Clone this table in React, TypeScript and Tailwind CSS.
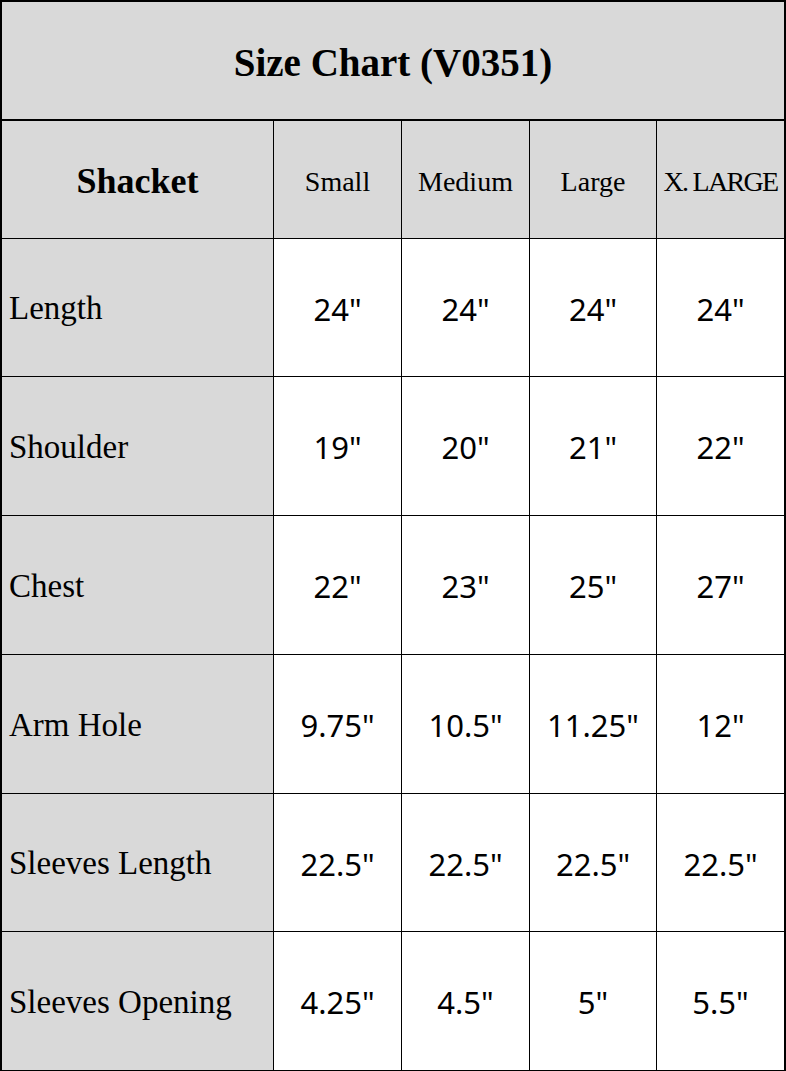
import React from 'react'

const sizes = ['Small', 'Medium', 'Large', 'X. LARGE']

const rows: { label: string; values: string[]; h: string }[] = [
    { label: 'Length', values: ['24"', '24"', '24"', '24"'], h: 'h-[137px]' },
    { label: 'Shoulder', values: ['19"', '20"', '21"', '22"'], h: 'h-[138px]' },
    { label: 'Chest', values: ['22"', '23"', '25"', '27"'], h: 'h-[138px]' },
    { label: 'Arm Hole', values: ['9.75"', '10.5"', '11.25"', '12"'], h: 'h-[138px]' },
    { label: 'Sleeves Length', values: ['22.5"', '22.5"', '22.5"', '22.5"'], h: 'h-[137px]' },
    { label: 'Sleeves Opening', values: ['4.25"', '4.5"', '5"', '5.5"'], h: 'h-[138px]' },
]

const serif = "font-['Liberation_Serif','Times_New_Roman',serif]"
const sans = "font-['Noto_Sans','Open_Sans',sans-serif]"

export default function App() {
    return (
        <div className="w-[786px] h-[1071px] bg-white">
            <div className="w-[786px] border-t-2 border-l-2 border-r-2 border-b border-black bg-black">
                {/* Title */}
                <div className={`h-[119px] bg-[#d9d9d9] flex items-center justify-center border-b-2 border-black ${serif}`}>
                    <h1 className="text-[39px] font-bold text-black leading-none pt-[3px]">Size Chart (V0351)</h1>
                </div>

                {/* Table */}
                <div className="grid grid-cols-[271px_127px_127px_126px_127px] gap-px bg-black">
                    <div className={`h-[117px] bg-[#d9d9d9] flex items-center justify-center pt-[3px] ${serif}`}>
                        <span className="text-[36px] font-bold text-black">Shacket</span>
                    </div>
                    {sizes.map((s) => (
                        <div key={s} className={`h-[117px] bg-[#d9d9d9] flex items-center justify-center pt-[5px] ${serif}`}>
                            <span className={`text-[28px] text-black whitespace-nowrap ${s === 'X. LARGE' ? 'tracking-[-0.06em]' : ''}`}>{s}</span>
                        </div>
                    ))}

                    {rows.map((r) => (
                        <React.Fragment key={r.label}>
                            <div className={`${r.h} bg-[#d9d9d9] flex items-center pl-[7px] pt-[3px] ${serif}`}>
                                <span className="text-[33px] text-black whitespace-nowrap">{r.label}</span>
                            </div>
                            {r.values.map((v, i) => (
                                <div key={i} className={`${r.h} bg-white flex items-center justify-center pt-[3px] ${sans}`}>
                                    <span className="text-[31px] text-black">{v}</span>
                                </div>
                            ))}
                        </React.Fragment>
                    ))}
                </div>
            </div>
        </div>
    )
}
